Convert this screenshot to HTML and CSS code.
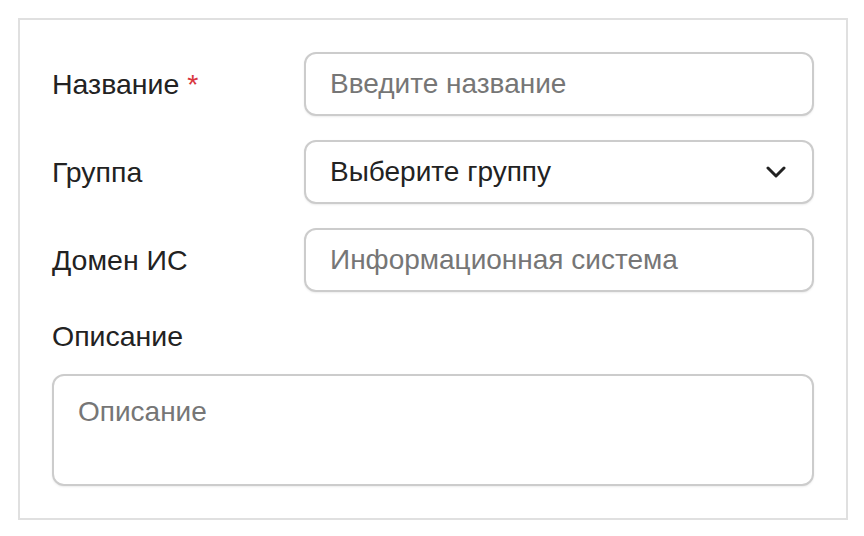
FILE: index.html
```html
<!DOCTYPE html>
<html lang="ru">
<head>
    <meta charset="UTF-8">
    <meta name="viewport" content="width=device-width, initial-scale=1.0">
    <title>Форма</title>
    <link rel="stylesheet" href="styles.css">
</head>
<body>
    <form class="card">
        <div class="row">
            <label class="label" for="name">Название <span class="required">*</span></label>
            <input class="field" id="name" type="text" placeholder="Введите название">
        </div>
        <div class="row">
            <label class="label" for="group">Группа</label>
            <div class="select">
                <span>Выберите группу</span>
                <svg class="chevron" width="20" height="12" viewBox="0 0 20 12">
                    <path d="M2 2 L10 10 L18 2" fill="none" stroke="#222" stroke-width="3" stroke-linecap="round" stroke-linejoin="round"/>
                </svg>
            </div>
        </div>
        <div class="row">
            <label class="label" for="domain">Домен ИС</label>
            <input class="field" id="domain" type="text" placeholder="Информационная система">
        </div>
        <div class="block">
            <label class="label" for="desc">Описание</label>
            <textarea class="area" id="desc" placeholder="Описание"></textarea>
        </div>
    </form>
</body>
</html>
```

FILE: styles.css
```css
body {
    margin: 0;
    padding: 18px;
    background-color: #fff;
    font-family: "Liberation Sans", Arial, sans-serif;
    color: #222;
}

.card {
    width: 762px;
    padding: 32px;
    border: 2px solid #e0e0e0;
    display: flex;
    flex-direction: column;
    gap: 24px;
}

.row {
    display: flex;
    align-items: center;
}

.label {
    width: 252px;
    flex-shrink: 0;
    font-size: 28.5px;
    line-height: 32px;
    color: #222;
}

.required {
    color: #d9363e;
}

.field,
.select,
.area {
    box-sizing: border-box;
    border: 2px solid #cccccc;
    border-radius: 12px;
    background: #fff;
    box-shadow: 0 1px 2px rgba(0, 0, 0, 0.08);
    font-family: inherit;
    font-size: 28px;
    color: #222;
    outline: none;
}

.field,
.select {
    width: 510px;
    height: 64px;
    padding: 0 24px;
}

.field::placeholder,
.area::placeholder {
    color: #767676;
}

.select {
    display: flex;
    align-items: center;
    justify-content: space-between;
    padding-right: 26px;
}

.block {
    display: flex;
    flex-direction: column;
    gap: 22px;
    margin-top: 4px;
}

.area {
    display: block;
    width: 762px;
    height: 112px;
    padding: 20px 24px;
    resize: none;
}
```
